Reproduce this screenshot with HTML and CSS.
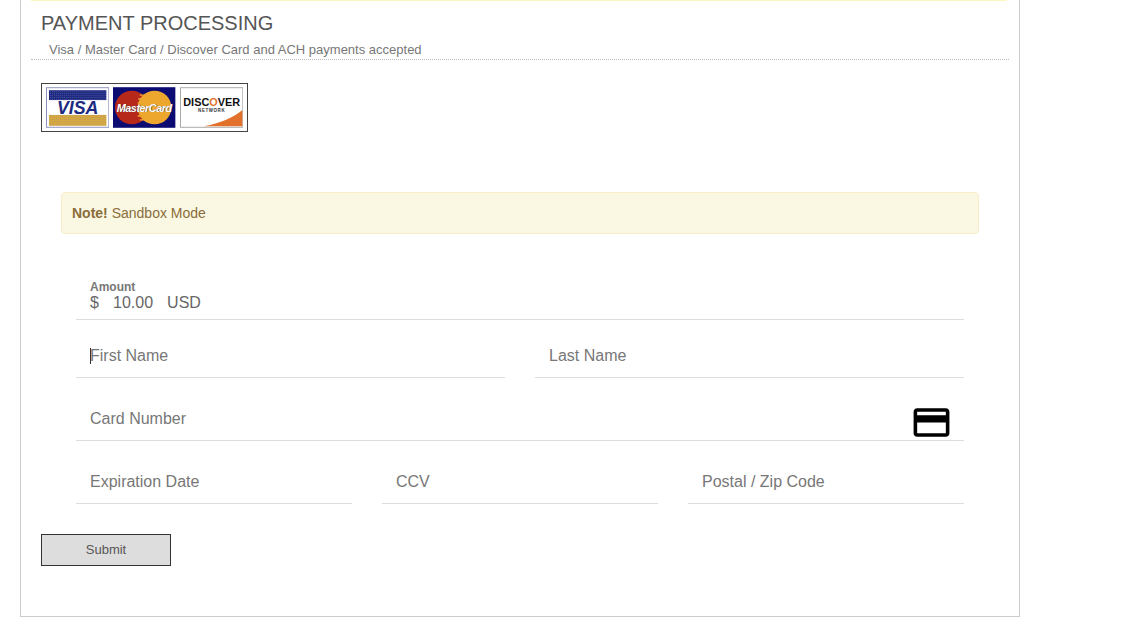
FILE: index.html
```html
<!DOCTYPE html>
<html lang="en">
<head>
    <meta charset="UTF-8">
    <title>Payment Processing</title>
    <link rel="stylesheet" href="styles.css">
</head>
<body>
    <div class="panel">
        <div class="page-header">
            <h1>Payment Processing</h1>
            <p>Visa / Master Card / Discover Card and ACH payments accepted</p>
        </div>

        <div class="card-logos">
            <svg width="64" height="41" viewBox="0 0 64 41">
                <defs>
                    <pattern id="navy-dots" width="2" height="2" patternUnits="userSpaceOnUse">
                        <rect width="2" height="2" fill="#1d2a80"/>
                        <rect width="1" height="1" fill="#4a4f9c"/>
                    </pattern>
                    <pattern id="gold-dots" width="2" height="2" patternUnits="userSpaceOnUse">
                        <rect width="2" height="2" fill="#d8a93f"/>
                        <rect width="1" height="1" fill="#b99a5a"/>
                    </pattern>
                </defs>
                <rect x="0.5" y="0.5" width="63" height="40" fill="#fff" stroke="#8d93bd"/>
                <rect x="3" y="3" width="58" height="10" fill="url(#navy-dots)"/>
                <rect x="3" y="28" width="58" height="11" fill="url(#gold-dots)"/>
                <text x="32" y="27" class="visa-text">VISA</text>
            </svg>
            <svg width="63" height="41" viewBox="0 0 63 41">
                <rect width="63" height="41" fill="#0b0b72"/>
                <circle cx="19" cy="20.5" r="17" fill="#b5281a"/>
                <circle cx="42" cy="20.5" r="17" fill="#eda62e"/>
                <path d="M27 8h8M25.5 12h11M25 16h12M25 29h12M27 33h8" stroke="#eda62e" stroke-width="1.5"/>
                <text x="32" y="25.5" class="mc-shadow">MasterCard</text>
                <text x="31.5" y="25" class="mc-text">MasterCard</text>
            </svg>
            <svg width="64" height="41" viewBox="0 0 64 41">
                <rect x="0.5" y="0.5" width="63" height="40" fill="#fff" stroke="#aaa"/>
                <path d="M24 39.5 C42 36 55 30 63 23 V39.5 Z" fill="#e2722b"/>
                <text x="32" y="18.5" class="discover-text">DISC<tspan class="discover-o">O</tspan>VER</text>
                <text x="32" y="25" class="network-text">NETWORK</text>
            </svg>
        </div>

        <div class="alert"><strong>Note!</strong> Sandbox Mode</div>

        <form class="pay-form">
            <div class="amount">
                <label>Amount</label>
                <div class="amount-value">$ &nbsp; 10.00 &nbsp; USD</div>
            </div>
            <div class="row">
                <div class="field first-name"><input type="text" placeholder="First Name"><span class="caret"></span></div>
                <div class="field"><input type="text" placeholder="Last Name"></div>
            </div>
            <div class="row">
                <div class="field">
                    <input type="text" placeholder="Card Number">
                    <svg class="card-icon" width="43" height="43" viewBox="0 0 24 24"><path d="M20 4H4c-1.11 0-1.99.89-1.99 2L2 18c0 1.11.89 2 2 2h16c1.11 0 2-.89 2-2V6c0-1.11-.89-2-2-2zm0 14H4v-6h16v6zm0-10H4V6h16v2z"/></svg>
                </div>
            </div>
            <div class="row">
                <div class="field"><input type="text" placeholder="Expiration Date"></div>
                <div class="field"><input type="text" placeholder="CCV"></div>
                <div class="field"><input type="text" placeholder="Postal / Zip Code"></div>
            </div>
        </form>

        <button class="submit" type="button">Submit</button>
    </div>
</body>
</html>
```

FILE: styles.css
```css
body {
    margin: 0;
    background: #fff;
    font-family: "Liberation Sans", Arial, sans-serif;
    color: #555;
}
.panel {
    box-sizing: border-box;
    width: 1000px;
    height: 617px;
    margin-left: 20px;
    padding: 0 10px;
    border: 1px solid #ccc;
    border-top: none;
}
.page-header {
    height: 59px;
    border-bottom: 1px dotted #bbb;
}
.page-header::before {
    content: "";
    display: block;
    width: 976px;
    height: 1px;
    background: #fdf6c0;
}
.page-header h1 {
    margin: 0;
    padding: 11px 0 0 10px;
    font-size: 20px;
    line-height: 23px;
    font-weight: normal;
    text-transform: uppercase;
    color: #555;
}
.page-header p {
    margin: 0;
    padding: 7px 0 0 18px;
    font-size: 13px;
    line-height: 15px;
    color: #777;
}
.card-logos {
    box-sizing: border-box;
    display: flex;
    gap: 4px;
    width: 207px;
    height: 49px;
    margin: 23px 0 0 10px;
    padding: 3px 4px;
    border: 1px solid #444;
}
.visa-text {
    font: italic bold 18px "Liberation Sans", sans-serif;
    fill: #1d2a80;
    text-anchor: middle;
}
.mc-text,
.mc-shadow {
    font: italic bold 11px "Liberation Sans", sans-serif;
    text-anchor: middle;
    letter-spacing: -0.5px;
}
.mc-text {
    fill: #fff;
}
.mc-shadow {
    fill: #333;
}
.discover-text {
    font: bold 11px "Liberation Sans", sans-serif;
    fill: #111;
    text-anchor: middle;
}
.discover-o {
    fill: #e2722b;
}
.network-text {
    font: bold 4.5px "Liberation Sans", sans-serif;
    fill: #333;
    text-anchor: middle;
    letter-spacing: 0.6px;
}
.alert {
    box-sizing: border-box;
    height: 42px;
    margin: 60px 30px 0;
    padding: 0 10px;
    background: #faf7e2;
    border: 1px solid #f8edc9;
    border-radius: 4px;
    font-size: 14px;
    line-height: 40px;
    color: #8a6d3b;
}
.pay-form {
    margin: 0 45px;
    padding-top: 46px;
}
.amount {
    box-sizing: border-box;
    height: 40px;
    padding-left: 14px;
    border-bottom: 1px solid #ddd;
}
.amount label {
    display: block;
    font-size: 12px;
    line-height: 14px;
    font-weight: bold;
    color: #777;
}
.amount-value {
    font-size: 16px;
    line-height: 18px;
    word-spacing: 0.25px;
    color: #666;
}
.row {
    display: flex;
    gap: 30px;
}
.amount + .row {
    padding-top: 17px;
}
.row + .row {
    margin-top: 22px;
}
.field {
    flex: 1;
    position: relative;
    min-width: 0;
}
.field input {
    box-sizing: border-box;
    display: block;
    width: 100%;
    height: 41px;
    padding: 0 14px 2px;
    border: none;
    border-bottom: 1px solid #ddd;
    outline: none;
    background: transparent;
    font-family: "Liberation Sans", Arial, sans-serif;
    font-size: 16px;
    color: #555;
}
.field input::placeholder {
    color: #777;
    opacity: 1;
}
.caret {
    position: absolute;
    left: 14px;
    top: 11px;
    width: 1px;
    height: 16px;
    background: #333;
}
.card-icon {
    position: absolute;
    right: 11px;
    top: 0.8px;
}
.submit {
    display: block;
    box-sizing: border-box;
    width: 130px;
    height: 32px;
    margin: 30px 0 0 10px;
    padding: 0 0 2px;
    background: #ddd;
    border: 1px solid #333;
    border-radius: 0;
    font-family: "Liberation Sans", Arial, sans-serif;
    font-size: 13px;
    color: #555;
}
```
